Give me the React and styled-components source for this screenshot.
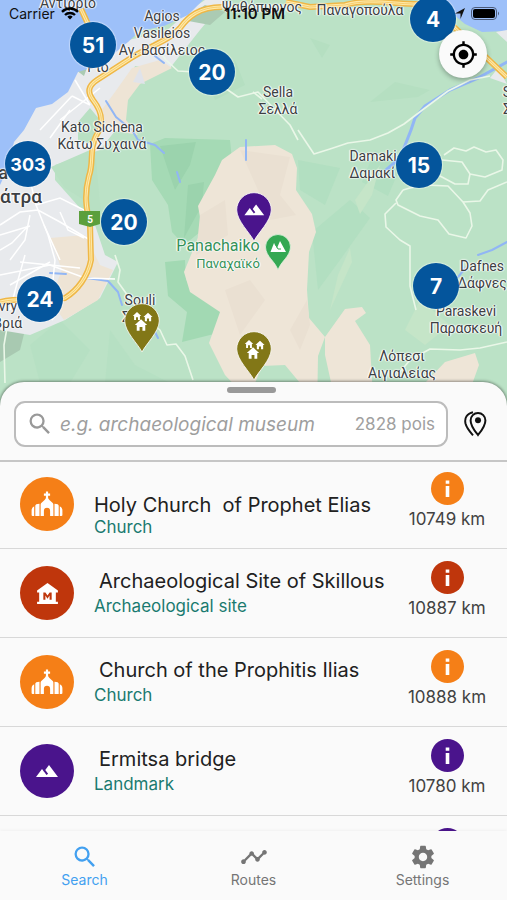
import React, { useState } from 'react'
import styled, { createGlobalStyle } from 'styled-components'
import { MdSearch, MdTimeline, MdSettings, MdGpsFixed, MdMuseum, MdLandscape } from 'react-icons/md'

const GlobalStyle = createGlobalStyle`
    * {
        box-sizing: border-box;
    }
    body {
        margin: 0;
        background: #fafafa;
        font-family: Inter, "Noto Sans", sans-serif;
    }
    button {
        border: none;
        padding: 0;
        background: none;
        font-family: inherit;
        cursor: pointer;
    }
`;

const Screen = styled.div`
    height: 100vh;
    display: flex;
    flex-direction: column;
    overflow: hidden;
    background: #fafafa;
`;

/* ---------- map ---------- */

const MapArea = styled.section`
    position: relative;
    flex: 0 0 46vh;
    overflow: hidden;
    background: #bbe2c6;
`;

const MapCanvas = styled.svg`
    display: block;
    width: 100%;
    height: 100%;
`;

const Place = styled.span`
    position: absolute;
    left: ${props => props.$x}px;
    top: ${props => props.$y}px;
    transform: translate(-50%, -50%);
    font-family: Roboto, "Noto Sans", sans-serif;
    font-size: ${props => props.$size || 14}px;
    font-weight: ${props => props.$bold ? 500 : 400};
    line-height: 17px;
    white-space: pre;
    text-align: ${props => props.$align || "center"};
    color: ${props => props.$color || "#3c4043"};
    text-shadow: 0 0 2px white, 0 0 2px white, 1px 0 1px white, -1px 0 1px white;
`;

const Cluster = styled.button`
    position: absolute;
    left: ${props => props.$x}px;
    top: ${props => props.$y}px;
    width: 46px;
    height: 46px;
    margin: -23px 0 0 -23px;
    border-radius: 50%;
    background: #04559c;
    box-shadow: 0 0 1px 1px rgba(255, 255, 255, 0.4);
    color: white;
    font-size: ${props => props.$small ? "18px" : "21px"};
    font-weight: 700;
`;

const PinButton = styled.button`
    position: absolute;
    left: ${props => props.$x}px;
    top: ${props => props.$y}px;
    width: 38px;
    height: 50px;
    margin: -19px 0 0 -19px;
    svg {
        display: block;
    }
`;

const LocateButton = styled.button`
    position: absolute;
    top: 30px;
    right: 20px;
    width: 48px;
    height: 48px;
    display: flex;
    align-items: center;
    justify-content: center;
    border-radius: 50%;
    background: #fafafa;
    box-shadow: 0 2px 5px rgba(0, 0, 0, 0.3);
    color: black;
`;

const StatusBar = styled.header`
    position: absolute;
    top: 0;
    left: 0;
    right: 0;
    height: 27px;
    padding: 0 7px 0 9px;
    display: grid;
    grid-template-columns: 1fr auto 1fr;
    align-items: center;
    font-size: 14px;
    color: #111;
    pointer-events: none;
`;

const StatusGroup = styled.div`
    display: flex;
    align-items: center;
    gap: 6px;
    justify-content: ${props => props.$end ? "flex-end" : "flex-start"};
`;

const Clock = styled.time`
    font-size: 15px;
    font-weight: 600;
`;

/* ---------- bottom sheet ---------- */

const Sheet = styled.main`
    position: relative;
    flex: 1;
    min-height: 0;
    margin-top: -32px;
    display: flex;
    flex-direction: column;
    overflow: hidden;
    border-radius: 24px 24px 0 0;
    background: #fafafa;
    box-shadow: 0 0 3px 1px rgba(0, 0, 0, 0.4);
`;

const SheetHeader = styled.div`
    padding: 5px 19px 13px 14px;
    border-bottom: 2px solid #c6c6c6;
`;

const Handle = styled.div`
    width: 49px;
    height: 6px;
    margin: 0 auto 8px;
    border-radius: 3px;
    background: #999;
`;

const SearchRow = styled.form`
    display: flex;
    align-items: center;
    gap: 16px;
`;

const SearchBox = styled.label`
    flex: 1;
    min-width: 0;
    height: 46px;
    padding: 0 11px 0 10px;
    display: flex;
    align-items: center;
    gap: 6px;
    border: 2px solid #bcbcbc;
    border-radius: 11px;
    background: white;
    color: #999;
`;

const SearchInput = styled.input`
    flex: 1;
    min-width: 0;
    padding: 0;
    border: none;
    outline: none;
    background: transparent;
    font-family: inherit;
    font-size: 19px;
    color: #222;
    &::placeholder{
        color: #9e9e9e;
        font-style: italic;
        opacity: 1;
    }
`;

const Count = styled.span`
    font-size: 17px;
    white-space: nowrap;
    color: #a0a0a0;
`;

const FilterButton = styled.button`
    display: flex;
    color: #111;
`;

const List = styled.ul`
    flex: 1;
    min-height: 0;
    margin: 0;
    padding: 0;
    overflow: hidden;
    list-style: none;
`;

const Row = styled.li`
    height: 89px;
    padding: 0 19px 0 20px;
    display: flex;
    align-items: center;
    border-bottom: 1px solid #d8d8d8;
    &:first-child{
        height: 87px;
        padding-bottom: 2px;
    }
`;

const Badge = styled.div`
    flex: none;
    width: 54px;
    height: 54px;
    margin-right: 20px;
    display: flex;
    align-items: center;
    justify-content: center;
    border-radius: 50%;
    background: ${props => props.$color};
    color: white;
`;

const Details = styled.div`
    flex: 1;
    min-width: 0;
    padding-top: ${props => props.$low ? "26px" : "0"};
`;

const Title = styled.h2`
    margin: 0;
    padding-left: ${props => props.$low ? "0" : "5px"};
    font-size: 20px;
    font-weight: 400;
    line-height: ${props => props.$low ? "20px" : "26px"};
    white-space: pre;
    color: #212121;
`;

const Kind = styled.p`
    margin: 0;
    font-size: 17px;
    line-height: 24px;
    color: #1a7a70;
`;

const Distance = styled.div`
    flex: none;
    width: 82px;
    padding-bottom: 7px;
    display: flex;
    flex-direction: column;
    align-items: center;
    gap: 3px;
    font-size: 17px;
    line-height: 22px;
    white-space: nowrap;
    color: #424242;
`;

const InfoButton = styled.button`
    display: flex;
    color: ${props => props.$color};
`;

/* ---------- tabs ---------- */

const TabBar = styled.nav`
    position: relative;
    flex: none;
    height: 69px;
    display: grid;
    grid-template-columns: repeat(3, 1fr);
    background: #fafafa;
    box-shadow: 0 -1px 3px rgba(0, 0, 0, 0.04);
`;

const Tab = styled.button`
    display: flex;
    flex-direction: column;
    align-items: center;
    padding-top: 12px;
    font-size: 14px;
    line-height: 18px;
    color: ${props => props.$active ? "#42a0f0" : "#757575"};
`;

const orange = "#f57f17";
const red = "#bf360c";
const purple = "#4a148c";
const olive = "#827717";

const ChurchIcon = () => (
    <svg width="32" height="26" viewBox="0 0 32 26" fill="currentColor">
        <path d="M14.900 0.500h2.200v2h2v2.200h-2V7q.2 1 1.600 2.200l3 2.800q.7.700.7 1.800V25h-3.300v-5.200a3.100 3.100 0 0 0-6.200 0V25H9.600V13.800q0-1.100.7-1.800l3-2.800q1.400-1.200 1.600-2.200V4.700h-2V2.500h2z" />
        <path d="M8.500 12.800V25H4.300V14.800q0-2 4.200-2zM23.500 12.800V25h4.200V14.800q0-2-4.200-2zM3.200 15.200V25H1.600q-1 0-1-1v-4.500q0-3.300 2.600-4.300zM28.800 15.200V25h1.600q1 0 1-1v-4.500q0-3.300-2.600-4.300z" />
    </svg>
)

const InfoIcon = () => (
    <svg width="33" height="33" viewBox="0 0 33 33">
        <circle cx="16.500" cy="16.500" r="16.500" fill="currentColor" />
        <path d="M14.700 8.500h3.600v3.200h-3.600zM14.700 14h3.600v11h-3.600z" fill="white" />
    </svg>
)

const MarkersIcon = () => (
    <svg width="24" height="26" viewBox="0 0 24 26" fill="none" stroke="currentColor" strokeWidth="2">
        <path d="M14 24C10.500 19.500 6.600 15 6.600 9.400A7.300 7.400 0 0 1 21.400 9.400C21.400 15 17.500 19.500 14 24z" />
        <path d="M9 1.300C3 2.700 0.300 7 1.500 12.500 2.600 17 5.600 20.500 9 24.300" />
        <circle cx="14" cy="9.200" r="3" fill="currentColor" stroke="none" />
    </svg>
)

const kinds = {
    church: <ChurchIcon />,
    museum: <MdMuseum size={25} />,
    landmark: <MdLandscape size={24} />,
}

const House = ({ x, y, s }) => (
    <path
        transform={`translate(${x} ${y}) scale(${s})`}
        d="M0-6L6.500 0H4.500V6H1.500V2H-1.500V6H-4.500V0H-6.500z"
        fill="white"
    />
)

const Pin = ({ x, y, type, label }) => (
    <PinButton $x={x} $y={y} aria-label={label}>
        <svg width="38" height="50" viewBox="-19 -19 38 50">
            <path
                d="M0 30C-4 22-17 10-17.300-1A17.300 17.300 0 0 1 17.300-1C17 10 4 22 0 30z"
                fill={type === "village" ? olive : purple}
                stroke="white"
                strokeWidth="0.800"
            />
            {type === "village" ? (
                <>
                    <House x={-5} y={-6} s={0.65} />
                    <House x={6} y={-5} s={0.7} />
                    <House x={-1} y={3} s={0.95} />
                </>
            ) : (
                <path transform="translate(-10.500 -12) scale(0.900)" d="M14 6l-3.750 5 2.850 3.800-1.600 1.200C9.810 13.750 7 10 7 10l-6 8h22z" fill="white" />
            )}
        </svg>
    </PinButton>
)

const highway = [
    "M81 9L88 24M222 7C199 7 188 17 180 28C170 40 150 46 131 58L97 80C88 86 87 92 93 100C104 114 103 125 96 136C89 150 94 162 89 176C84 195 86 208 90 224L91 260C88 276 78 290 65 298C45 302 20 297 0 302",
    "M286 2L310 7L345 5C370 -2 400 5 422 4L455 28L507 77",
]

const minorRoads = [
    "M144 30L166 60L178 71L195 72L225 88L238 97L258 92L290 125L298 140",
    "M253 92L262 99M298 130L314 154L330 149L348 143L370 140L388 133L404 124L425 108L448 91L470 80L490 76",
    "M444 155L454 148L466 151L474 147L486 152L496 150L503 160L502 170L485 177L470 174L462 162L442 160M470 174L468 184L455 184L440 176",
    "M403 190L410 188L425 185L448 186L463 202L470 213L472 226L466 238L449 234L438 220L420 216L398 205L396 200L403 190M396 203L385 214L386 227L400 240L410 246L410 286L416 310",
    "M463 202L480 201L488 190L507 182M400 372L410 360L430 349L460 350L480 348L507 342",
    "M115 255L120 270L118 282L128 296L145 318L160 330L167 345L176 344L185 356L193 380",
    "M0 318L8 322L4 345L5 383",
]

const cityRoads = [
    "M0 225L20 212L38 210L60 222L90 240M10 260L25 240L30 215M52 290L55 260L48 235L36 205M0 275L50 265L85 278L115 279M0 250L12 243L28 226M60 212L68 230L84 238M30 180L36 205L60 198L88 212M25 255L18 280L10 310M60 120L100 88M40 130L72 96M72 96L90 105M75 80L90 105",
    "M20 262L80 268M10 285L50 262M65 298L52 320M0 235L30 226M44 225L60 260M70 110L50 138",
]

const MapDrawing = () => (
    <MapCanvas viewBox="0 0 507 414" preserveAspectRatio="xMinYMin slice" aria-hidden="true">
        <rect width="507" height="414" fill="#bbe2c6" />
        {/* shaded slopes */}
        <path d="M150 144L165 138L230 140L232 160L215 178L199 205L205 228L184 245L172 232L168 205L152 180z" fill="#a5dab5" />
        <path d="M160 146L196 142L190 165L175 190L168 170zM188 185L204 182L202 205L184 238z" fill="#9bd3ad" />
        <path d="M165 262L185 260L186 280L222 308L214 334L182 342L187 312L168 296z" fill="#a2d9b3" />
        <path d="M200 66L235 60L245 85L215 100zM310 38L330 45L322 58zM395 82L430 90L418 97L370 102z" fill="#b5dfc1" />
        <path d="M298 160L340 168L325 205L300 190zM312 232L350 200L370 218L340 260L318 290zM375 150L400 168L388 196L362 182z" fill="#b2dfc1" />
        <path d="M355 200L380 165L372 195L360 214zM338 275L350 248L352 262L330 310zM405 330L420 300L450 325L425 345z" fill="#c5e5c8" />
        <path d="M30 345L60 320L90 350L70 383L40 383zM110 330L135 365L170 383H105z" fill="#b6e0c3" />
        <path d="M0 330L25 330L20 350L0 362z" fill="#a8c9b1" />
        {/* sand */}
        <path d="M222 160L240 147L275 145L292 154L297 168L296 190L312 214L316 232L309 252L307 290L309 318L325 337L318 356L317 414H262L225 375L209 343L220 312L190 292L184 272L202 228L198 206L215 175z" fill="#eee5d7" />
        <path d="M325 337L345 309L362 307L366 313L355 321L370 345L374 414H338L325 355zM425 383L445 362L475 353L479 365L470 390z" fill="#eee5d7" />
        <path d="M240 150L290 157L280 195L296 215L270 220L258 190zM225 290L250 280L265 300L240 335zM290 330L307 300L310 325L300 350zM200 215L225 200L228 235L196 255z" fill="#eae0d2" />
        <path d="M262 366L285 365L300 383H255z" fill="#bbe2c6" />
        {/* coast and city */}
        <path d="M128 40L165 32L190 10L205 0L225 0L200 30L170 68L135 66L125 90L122 122L100 150L55 165L55 180L95 225L105 255L118 262L100 298L65 320L30 335L0 330V100L60 70z" fill="#e8eaed" />
        <path d="M132 68L160 60L172 68L140 84L128 100L126 120L138 135L112 130L98 115L115 92zM50 238L85 235L100 265L113 270L98 300L64 320L50 300L62 270z" fill="#eee4d5" />
        <path d="M133 82L140 68L145 84z" fill="#e0e3ea" />
        <path d="M78 122L90 108L100 120L95 145L78 140zM51 167L90 150L96 160L102 225H90L84 200L65 188z" fill="#b8e0c3" />
        <path d="M183 20L205 5L225 12L210 25zM76 70L88 65L84 76z" fill="#abcbb3" />
        <path d="M0 0H203L188 15L164 26L140 31L128 42L100 65L78 72L68 92L52 104L36 108L24 130L14 142L8 168L0 185z" fill="#9dc0f9" />
        <path d="M435 0H507V31L482 32L465 24L448 10z" fill="#9dc0f9" />
        <path d="M496 32L507 42V30zM490 78L498 68L507 84z" fill="#e8eaed" />
        {/* rivers */}
        <g fill="none" stroke="#91b6f5" strokeLinecap="round" strokeLinejoin="round">
            <path d="M106 101L116 117L132 130L138 140L155 145L164 153M177 172L180 182M246 140V160" strokeWidth="2" />
            <path d="M87 278L108 281L118 292L122 305M154 330L158 338M50 273L66 274M155 56L164 63" strokeWidth="2" />
            <path d="M411 130L415 118L425 106L450 90L478 78L507 62M411 130L400 158L386 170" strokeWidth="3" />
            <path d="M507 242L492 250L478 255M468 265L458 277" strokeWidth="2" />
        </g>
        {cityRoads.map((d, i) => (
            <path key={i} d={d} fill="none" stroke="white" strokeWidth="1.500" />
        ))}
        {minorRoads.map((d, i) => (
            <path key={i} d={d} fill="none" stroke="#eaf7e8" strokeWidth="1.600" strokeLinejoin="round" />
        ))}
        {highway.map((d, i) => (
            <g key={i} fill="none" strokeLinejoin="round">
                <path d={d} stroke="#efb746" strokeWidth="6" />
                <path d={d} stroke="#fde9a9" strokeWidth="3" />
                <path d={d} stroke="#f6c55c" strokeWidth="0.800" />
            </g>
        ))}
        <path d="M79 211H100V224L90 227L79 224z" fill="#5b9f3c" />
        {/* park marker */}
        <path d="M278 270C275 261 266 257 265.500 247A12.500 12.500 0 0 1 290.500 247C290 257 281 261 278 270z" fill="#34a853" stroke="#dff3e0" strokeWidth="0.800" />
        <path d="M270.500 252L274 243L277 248L280 241L286 252z" fill="white" />
        <path d="M275 244L278 249L281 249" fill="none" stroke="#34a853" strokeWidth="1" />
    </MapCanvas>
)

const places = [
    { x: 68, y: 3, text: "Αντίρριο" },
    { x: 162, y: 33, text: "Agios\nVasileios\nΑγ. Βασίλειος" },
    { x: 98, y: 67, text: "Ρίο" },
    { x: 262, y: 7, text: "Ψαθόπυργος" },
    { x: 360, y: 10, text: "Παναγοπούλα" },
    { x: 278, y: 101, text: "Sella\nΣελλά" },
    { x: 102, y: 136, text: "Kato Sichena\nΚάτω Συχαινά" },
    { x: 373, y: 165, text: "Damaki\nΔαμακί", align: "left" },
    { x: 3, y: 172, text: "a", size: 19, bold: true },
    { x: 21, y: 196, text: "άτρα", size: 19, bold: true },
    { x: 482, y: 275, text: "Dafnes\nΔάφνες" },
    { x: 466, y: 320, text: "Paraskevi\nΠαρασκευή" },
    { x: 402, y: 365, text: "Λόπεσι\nΑιγιαλείας" },
    { x: 140, y: 309, text: "Souli\nΣούλι" },
    { x: 8, y: 315, text: "vry\nβριά" },
    { x: 507, y: 101, text: "S\nΣ" },
    { x: 218, y: 245, text: "Panachaiko", color: "#349158", size: 16 },
    { x: 228, y: 263, text: "Παναχαϊκό", color: "#349158", size: 13 },
    { x: 90, y: 219, text: "5", color: "white", size: 10, flat: true },
]

const RoadNumber = styled(Place)`
    font-weight: 700;
    text-shadow: none;
`;

const clusters = [
    { x: 93, y: 45, count: 51 },
    { x: 212, y: 72, count: 20 },
    { x: 433, y: 19, count: 4 },
    { x: 28, y: 164, count: 303 },
    { x: 419, y: 165, count: 15 },
    { x: 124, y: 222, count: 20 },
    { x: 40, y: 299, count: 24 },
    { x: 436, y: 286, count: 7 },
]

const pois = [
    { id: 1, name: "Holy Church  of Prophet Elias", kind: "Church", icon: "church", color: orange, km: 10749, low: true },
    { id: 2, name: "Archaeological Site of Skillous", kind: "Archaeological site", icon: "museum", color: red, km: 10887 },
    { id: 3, name: "Church of the Prophitis Ilias", kind: "Church", icon: "church", color: orange, km: 10888 },
    { id: 4, name: "Ermitsa bridge", kind: "Landmark", icon: "landmark", color: purple, km: 10780 },
    { id: 5, icon: "landmark", color: purple },
]

const tabs = [
    { name: "Search", Icon: MdSearch },
    { name: "Routes", Icon: MdTimeline },
    { name: "Settings", Icon: MdSettings },
]

const App = () => {

    const [query, setQuery] = useState("");
    const [tab, setTab] = useState("Search");

    return (
        <Screen>
            <GlobalStyle />
            <MapArea>
                <MapDrawing />
                {places.map(p => {
                    const Label = p.flat ? RoadNumber : Place
                    return (
                        <Label key={p.text} $x={p.x} $y={p.y} $size={p.size} $color={p.color} $align={p.align} $bold={p.bold}>{p.text}</Label>
                    )
                })}
                {clusters.map(c => (
                    <Cluster key={`${c.x}-${c.y}`} $x={c.x} $y={c.y} $small={c.count > 99}>{c.count}</Cluster>
                ))}
                <Pin x={254} y={211} type="landmark" label="Landmark" />
                <Pin x={142} y={322} type="village" label="Village" />
                <Pin x={254} y={350} type="village" label="Village" />
                <LocateButton aria-label="My location">
                    <MdGpsFixed size={29} />
                </LocateButton>
                <StatusBar>
                    <StatusGroup>
                        <span>Carrier</span>
                        <svg width="18" height="13" viewBox="0 0 18 13" fill="none" stroke="black" strokeWidth="2.400">
                            <path d="M1 4.800a11.400 11.400 0 0 1 16 0M4 8a7.200 7.200 0 0 1 10 0" />
                            <path d="M9 12.500L6.300 9.800a3.900 3.900 0 0 1 5.400 0z" fill="black" stroke="none" />
                        </svg>
                    </StatusGroup>
                    <Clock>11:10 PM</Clock>
                    <StatusGroup $end>
                        <svg width="10" height="11" viewBox="0 0 10 11">
                            <path d="M10 0L5.500 11V5.500H0z" fill="#111" />
                        </svg>
                        <svg width="29" height="13" viewBox="0 0 29 13">
                            <rect x="0.500" y="0.500" width="25" height="12" rx="3.500" fill="none" stroke="#4b5a78" />
                            <rect x="2" y="2" width="22" height="9" rx="2" fill="black" />
                            <path d="M27 4.500q2 2 0 4z" fill="#4b5a78" />
                        </svg>
                    </StatusGroup>
                </StatusBar>
            </MapArea>
            <Sheet>
                <SheetHeader>
                    <Handle />
                    <SearchRow onSubmit={(e) => e.preventDefault()}>
                        <SearchBox>
                            <MdSearch size={28} />
                            <SearchInput
                                aria-label="Search"
                                placeholder="e.g. archaeological museum"
                                value={query}
                                onChange={(e) => setQuery(e.target.value)}
                            />
                            <Count>2828 pois</Count>
                        </SearchBox>
                        <FilterButton type="button" aria-label="Filter markers">
                            <MarkersIcon />
                        </FilterButton>
                    </SearchRow>
                </SheetHeader>
                <List>
                    {pois.map(poi => (
                        <Row key={poi.id}>
                            <Badge $color={poi.color}>{kinds[poi.icon]}</Badge>
                            <Details $low={poi.low}>
                                {poi.name && <Title $low={poi.low}>{poi.name}</Title>}
                                {poi.kind && <Kind>{poi.kind}</Kind>}
                            </Details>
                            <Distance>
                                <InfoButton $color={poi.color} aria-label="Details">
                                    <InfoIcon />
                                </InfoButton>
                                <span>{poi.km ? `${poi.km} km` : "\u00a0"}</span>
                            </Distance>
                        </Row>
                    ))}
                </List>
            </Sheet>
            <TabBar>
                {tabs.map(({ name, Icon }) => (
                    <Tab key={name} $active={tab === name} onClick={() => setTab(name)}>
                        <Icon size={28} />
                        {name}
                    </Tab>
                ))}
            </TabBar>
        </Screen>
    )
}

export default App
